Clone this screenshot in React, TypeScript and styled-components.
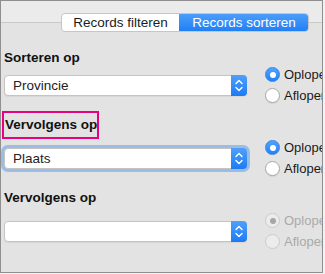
import React from "react";
import styled, { createGlobalStyle, css } from "styled-components";

const GlobalStyle = createGlobalStyle`
  html, body {
    margin: 0;
    padding: 0;
    background: #f2f2f2;
  }
  body {
    font-family: "Liberation Sans", Arial, Helvetica, sans-serif;
  }
`;

const Frame = styled.div`
  width: 323px;
  height: 273px;
  box-sizing: border-box;
  border: 1px solid #8f8f8f;
  background: #e3e3e3;
  overflow: hidden;
  display: flex;
  flex-direction: column;
`;

const TopBar = styled.div`
  height: 21px;
  flex: none;
  background: #ebebeb;
  border-bottom: 1px solid #c9c9c9;
`;

const Content = styled.div`
  display: flex;
  flex-direction: column;
  padding-left: 3px;
`;

const TabRow = styled.div`
  display: flex;
  justify-content: flex-end;
  margin-top: -10px;
  padding-right: 13px;
`;

const Segmented = styled.div`
  display: flex;
  height: 19px;
  box-sizing: border-box;
  border: 1px solid #c6c6c6;
  border-radius: 4px;
  background: #ffffff;
  overflow: hidden;
`;

const Tab = styled.div<{ $active?: boolean; $w: number }>`
  width: ${(p) => p.$w}px;
  display: flex;
  align-items: center;
  justify-content: center;
  font-size: 13.5px;
  line-height: 17px;
  color: #1b1b1b;
  ${(p) =>
    p.$active &&
    css`
      background: linear-gradient(#4d9ffa, #1f7ef5);
      color: #ffffff;
      margin: -1px -1px -1px 0;
      border-radius: 0 4px 4px 0;
    `}
`;

const Section = styled.div<{ $top: number }>`
  display: flex;
  flex-direction: column;
  margin-top: ${(p) => p.$top}px;
`;

const Label = styled.div<{ $highlight?: boolean }>`
  align-self: flex-start;
  position: relative;
  font-weight: bold;
  font-size: 13.5px;
  line-height: 16px;
  color: #111111;
  padding-left: ${(p) => (p.$highlight ? 1 : 0)}px;
  ${(p) =>
    p.$highlight &&
    css`
      &::after {
        content: "";
        position: absolute;
        top: -6px;
        bottom: -6px;
        left: -2px;
        right: -2px;
        border: 2px solid #e6037f;
      }
    `}
`;

const Row = styled.div<{ $gap: number }>`
  display: grid;
  grid-template-columns: 243px max-content;
  column-gap: 18px;
  align-items: center;
  margin-top: ${(p) => p.$gap}px;
`;

const Select = styled.div<{ $focused?: boolean }>`
  height: 21px;
  box-sizing: border-box;
  display: flex;
  border: 1px solid #c4c4c4;
  border-radius: 4px;
  background: #ffffff;
  box-shadow: ${(p) =>
    p.$focused
      ? "0 0 0 3px rgba(96, 156, 232, 0.55)"
      : "0 1px 1px rgba(0, 0, 0, 0.06)"};
`;

const SelectText = styled.div`
  flex: 1;
  padding-left: 8px;
  font-size: 13.5px;
  line-height: 19px;
  color: #222222;
`;

const Stepper = styled.div`
  width: 16px;
  margin: -1px -1px -1px 0;
  background: linear-gradient(#4fa0fa, #1c7bf4);
  border-radius: 0 4px 4px 0;
  display: flex;
  align-items: center;
  justify-content: center;
`;

const RadioGroup = styled.div`
  display: flex;
  flex-direction: column;
  margin: -11px 0 -10px;
`;

const RadioRow = styled.div`
  height: 21px;
  display: flex;
  align-items: center;
`;

const Circle = styled.div<{ $checked?: boolean; $disabled?: boolean }>`
  width: 15px;
  height: 15px;
  box-sizing: border-box;
  border-radius: 50%;
  display: flex;
  align-items: center;
  justify-content: center;
  flex: none;
  ${(p) =>
    p.$disabled
      ? css`
          background: #ececec;
          border: 1px solid #cbcbcb;
        `
      : p.$checked
      ? css`
          background: linear-gradient(#54a3fa, #2280f5);
          border: 1px solid #2f86f0;
        `
      : css`
          background: #ffffff;
          border: 1px solid #a8a8a8;
          box-shadow: 0 1px 1px rgba(0, 0, 0, 0.08);
        `}
`;

const Dot = styled.div<{ $disabled?: boolean }>`
  width: 6px;
  height: 6px;
  border-radius: 50%;
  background: ${(p) => (p.$disabled ? "#a6a6a6" : "#ffffff")};
`;

const RadioText = styled.span<{ $disabled?: boolean }>`
  margin-left: 4px;
  font-size: 13px;
  line-height: 16px;
  white-space: nowrap;
  color: ${(p) => (p.$disabled ? "#aaaaaa" : "#1a1a1a")};
`;

const Chevrons = () => (
  <svg width="16" height="19" viewBox="0 0 16 19">
    <polyline
      points="5,7.5 8,4.5 11,7.5"
      fill="none"
      stroke="#ffffff"
      strokeWidth="1.4"
      strokeLinecap="round"
      strokeLinejoin="round"
    />
    <polyline
      points="5,11.5 8,14.5 11,11.5"
      fill="none"
      stroke="#ffffff"
      strokeWidth="1.4"
      strokeLinecap="round"
      strokeLinejoin="round"
    />
  </svg>
);

type RadioProps = { label: string; checked?: boolean; disabled?: boolean };

const Radio = ({ label, checked, disabled }: RadioProps) => (
  <RadioRow>
    <Circle $checked={checked} $disabled={disabled}>
      {checked && <Dot $disabled={disabled} />}
    </Circle>
    <RadioText $disabled={disabled}>{label}</RadioText>
  </RadioRow>
);

type SortSectionProps = {
  title: string;
  value: string;
  top: number;
  gap: number;
  highlight?: boolean;
  focused?: boolean;
  disabled?: boolean;
};

const SortSection = ({
  title,
  value,
  top,
  gap,
  highlight,
  focused,
  disabled,
}: SortSectionProps) => (
  <Section $top={top}>
    <Label $highlight={highlight}>{title}</Label>
    <Row $gap={gap}>
      <Select $focused={focused}>
        <SelectText>{value}</SelectText>
        <Stepper>
          <Chevrons />
        </Stepper>
      </Select>
      <RadioGroup>
        <Radio label="Oplopend" checked disabled={disabled} />
        <Radio label="Aflopend" disabled={disabled} />
      </RadioGroup>
    </Row>
  </Section>
);

export default function App() {
  return (
    <>
      <GlobalStyle />
      <Frame>
        <TopBar />
        <Content>
          <TabRow>
            <Segmented>
              <Tab $w={117}>Records filteren</Tab>
              <Tab $w={130} $active>
                Records sorteren
              </Tab>
            </Segmented>
          </TabRow>
          <SortSection title="Sorteren op" value="Provincie" top={18} gap={9} />
          <SortSection
            title="Vervolgens op"
            value="Plaats"
            top={21}
            gap={15}
            highlight
            focused
          />
          <SortSection
            title="Vervolgens op"
            value=""
            top={21}
            gap={15}
            disabled
          />
        </Content>
      </Frame>
    </>
  );
}
